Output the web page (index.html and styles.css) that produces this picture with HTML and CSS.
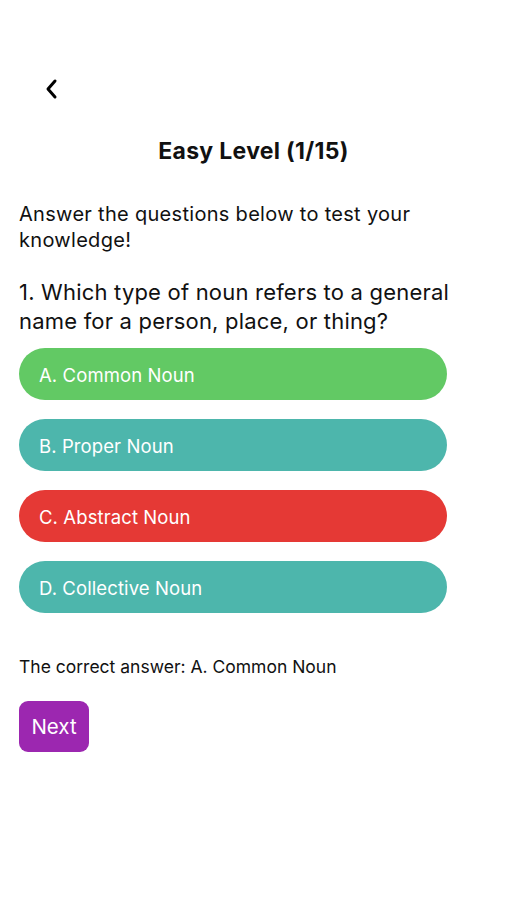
FILE: index.html
```html
<!DOCTYPE html>
<html>
<head>
<meta charset="utf-8">
<link rel="stylesheet" href="styles.css">
</head>
<body>
<div class="screen">
  <div class="topbar">
    <svg class="back" width="16" height="22" viewBox="0 0 16 22"><path d="M11 3 L4 11 L11 19" fill="none" stroke="#000" stroke-width="3" stroke-linecap="round" stroke-linejoin="round"/></svg>
  </div>
  <h1 class="title">Easy Level (1/15)</h1>
  <p class="intro">Answer the questions below to test your knowledge!</p>
  <p class="question">1. Which type of noun refers to a general name for a person, place, or thing?</p>
  <div class="options">
    <div class="opt green">A. Common Noun</div>
    <div class="opt teal">B. Proper Noun</div>
    <div class="opt red">C. Abstract Noun</div>
    <div class="opt teal">D. Collective Noun</div>
  </div>
  <p class="answer">The correct answer: A. Common Noun</p>
  <button class="next">Next</button>
</div>
</body>
</html>
```
FILE: styles.css
```css
* { box-sizing: border-box; }
html, body { margin: 0; padding: 0; background: #fff; }
body { font-family: Inter, "Noto Sans", sans-serif; color: #111; }
.screen { width: 507px; height: 900px; padding: 0 19px; }
.topbar { height: 100px; padding-top: 78px; padding-left: 25px; }
.back { display: block; }
.title { margin: 36px 0 0; text-align: center; font-size: 23px; font-weight: 700; line-height: 30px; letter-spacing: 0.3px; }
.intro { margin: 35px 0 0; font-size: 20px; line-height: 26px; width: 420px; letter-spacing: 0.3px; }
.question { margin: 25px 0 0; font-size: 22px; line-height: 29px; width: 440px; letter-spacing: 0.2px; }
.options { display: flex; flex-direction: column; gap: 19px; margin-top: 12px; width: 428px; }
.opt { height: 52px; border-radius: 26px; color: #fff; font-size: 18.5px; line-height: 54px; padding-left: 20px; letter-spacing: 0.1px; }
.green { background: #62c964; }
.teal { background: #4db6ac; }
.red { background: #e53935; }
.answer { margin: 42px 0 0; font-size: 17.5px; line-height: 24px; }
.next { margin-top: 22px; width: 70px; height: 51px; border: none; border-radius: 9px; background: #9c27b0; color: #fff; font-family: inherit; font-size: 20.5px; padding: 0; }
```
